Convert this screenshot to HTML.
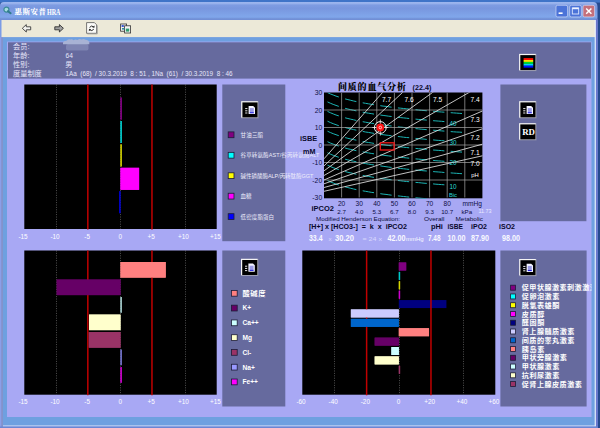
<!DOCTYPE html>
<html lang="zh"><head><meta charset="utf-8"><title>惠斯安普HRA</title>
<style>html,body{margin:0;padding:0;background:#25498e;overflow:hidden}svg{display:block}</style></head>
<body>
<svg width="600" height="428" viewBox="0 0 600 428">
<defs>
<linearGradient id="tb" gradientUnits="userSpaceOnUse" x1="0" y1="2" x2="0" y2="20"><stop offset="0" stop-color="#9cb6ee"/><stop offset="0.08" stop-color="#98b2ec"/><stop offset="0.17" stop-color="#7e9ce2"/><stop offset="0.35" stop-color="#7896de"/><stop offset="0.8" stop-color="#80a6ea"/><stop offset="0.9" stop-color="#7a9ee4"/><stop offset="0.94" stop-color="#6c88cc"/><stop offset="1" stop-color="#6c88cc"/></linearGradient>
<linearGradient id="rb" x1="0" y1="0" x2="0" y2="1"><stop offset="0" stop-color="#ff0000"/><stop offset="0.2" stop-color="#ff8000"/><stop offset="0.4" stop-color="#ffff00"/><stop offset="0.6" stop-color="#00e000"/><stop offset="0.8" stop-color="#00c0ff"/><stop offset="1" stop-color="#0000ff"/></linearGradient>
<filter id="blur2" x="-20%" y="-50%" width="140%" height="200%"><feGaussianBlur stdDeviation="0.7"/></filter><filter id="blur3" x="-20%" y="-50%" width="140%" height="200%"><feGaussianBlur stdDeviation="0.45"/></filter>
<clipPath id="bgclip"><rect x="324" y="92.5" width="158.4" height="106"/></clipPath>
<clipPath id="l4clip"><rect x="500.5" y="250.5" width="91" height="156"/></clipPath>
</defs>
<rect x="0.00" y="0.00" width="600.00" height="428.00" fill="#25498e" />
<rect x="0.00" y="0.00" width="600.00" height="2.60" fill="#3f74c8" />
<path d="M0,428 L0,6 Q0,2 4,2 L593,2 Q597.5,2 597.5,7 L597.5,428 Z" fill="url(#tb)"/>
<rect x="0.00" y="19.60" width="597.50" height="409.00" fill="#7b9be6" />
<rect x="1.50" y="20.00" width="594.00" height="17.30" fill="#ece9d8" />
<rect x="3.00" y="37.30" width="593.00" height="388.50" fill="#6ea0e0" />
<rect x="0.00" y="37.30" width="3.00" height="391.00" fill="#8c9ee8" />
<rect x="1.60" y="37.30" width="0.90" height="391.00" fill="#7a86b0" />
<rect x="594.70" y="20.00" width="1.20" height="406.00" fill="#eef6fe" />
<rect x="595.90" y="19.00" width="1.70" height="409.00" fill="#6a76cc" />
<rect x="3.00" y="425.50" width="593.00" height="1.00" fill="#dfe8fa" />
<rect x="0.00" y="426.50" width="597.50" height="1.50" fill="#6a86d4" />
<rect x="7.00" y="41.60" width="584.50" height="375.40" fill="#a8a8f4" />
<rect x="8.00" y="42.30" width="583.00" height="36.30" fill="#666a9e" />
<g>
<g filter="url(#blur3)"><circle cx="6.4" cy="9.6" r="2.5" fill="#a4dcdc" stroke="#3a8a98" stroke-width="1.2"/><path d="M8 11.2 L10.6 13.2" stroke="#2f7c8c" stroke-width="2" stroke-linecap="round"/></g>
<text x="14.50" y="13.80" font-size="7.4" fill="#fff" font-weight="900" font-family='"Liberation Serif","Noto Serif CJK SC",serif' text-anchor="start" textLength="31.5" lengthAdjust="spacing">惠斯安普</text>
<text x="47.00" y="14.80" font-size="7.2" fill="#fff" font-weight="bold" font-family='"Liberation Serif","Noto Serif CJK SC",serif' text-anchor="start" textLength="13.5" lengthAdjust="spacingAndGlyphs">HRA</text>
</g>
<rect x="556" y="5.3" width="11.6" height="11.6" rx="1.6" fill="#4b73d8" stroke="#dfe6fa" stroke-width="0.8" stroke-opacity="0.75"/>
<rect x="558.60" y="12.40" width="4.00" height="1.60" fill="#fff" />
<rect x="569.7" y="5.3" width="11.6" height="11.6" rx="1.6" fill="#4b73d8" stroke="#dfe6fa" stroke-width="0.8" stroke-opacity="0.75"/>
<rect x="572.3000000000001" y="8" width="6.4" height="6" fill="none" stroke="#dfe8ff" stroke-width="0.9"/><rect x="572.3000000000001" y="7.6" width="6.4" height="1.6" fill="#eef2ff"/>
<rect x="583" y="5.3" width="11.6" height="11.6" rx="1.6" fill="#c4707c" stroke="#dfe6fa" stroke-width="0.8" stroke-opacity="0.75"/>
<path d="M586.2 8.5 L591.4 13.7 M591.4 8.5 L586.2 13.7" stroke="#fff" stroke-width="1.5"/>
<path d="M22.3 28.3 L26.3 24.6 L26.3 26.8 L30.7 26.8 L30.7 29.8 L26.3 29.8 L26.3 32 Z" fill="#f4f4f0" stroke="#3a3a3a" stroke-width="0.9"/>
<path d="M63.4 28.3 L59.4 24.6 L59.4 26.8 L54.8 26.8 L54.8 29.8 L59.4 29.8 L59.4 32 Z" fill="#a0a0a0" stroke="#303030" stroke-width="0.9"/>
<path d="M86.6 22.6 L94.4 22.6 L96.6 24.8 L96.6 33.3 L86.6 33.3 Z" fill="#fbfbf8" stroke="#555" stroke-width="0.8"/><path d="M87.4 33.9 L97.3 33.9 L97.3 25.4" fill="none" stroke="#9a9a9a" stroke-width="0.8"/>
<path d="M89.6 27.4 q2 -2.6 4.2 -0.4 M93.8 29.2 q-2 2.6 -4.2 0.4" fill="none" stroke="#2a2a2a" stroke-width="1"/><path d="M94.6 25.4 L94.4 27.8 L92.2 27.2 Z M88.8 31.2 L89 28.8 L91.2 29.4 Z" fill="#2a2a2a"/>
<rect x="120.6" y="24" width="6" height="7.2" fill="#f0f0f0" stroke="#333" stroke-width="0.8"/><rect x="124.6" y="25.8" width="6" height="7.2" fill="#f4f4f4" stroke="#333" stroke-width="0.8"/><rect x="121.6" y="25" width="2.2" height="2" fill="#3c5ad0"/><rect x="125.8" y="28.6" width="3.4" height="3" fill="#2f9f6f"/><rect x="122" y="28" width="2.4" height="1.6" fill="#2f8f9f"/>
<text x="13.00" y="49.10" font-size="7.2" fill="#e6e6fa" font-weight="normal" font-family='"Liberation Sans","Noto Sans CJK SC",sans-serif' text-anchor="start" >会员:</text>
<text x="13.00" y="57.95" font-size="7.2" fill="#e6e6fa" font-weight="normal" font-family='"Liberation Sans","Noto Sans CJK SC",sans-serif' text-anchor="start" >年龄:</text>
<text x="13.00" y="66.80" font-size="7.2" fill="#e6e6fa" font-weight="normal" font-family='"Liberation Sans","Noto Sans CJK SC",sans-serif' text-anchor="start" >性别:</text>
<text x="13.00" y="75.65" font-size="7.2" fill="#e6e6fa" font-weight="normal" font-family='"Liberation Sans","Noto Sans CJK SC",sans-serif' text-anchor="start" >度量制度</text>
<text x="65.50" y="58.20" font-size="6.6" fill="#e6e6fa" font-weight="normal" font-family='"Liberation Sans","Noto Sans CJK SC",sans-serif' text-anchor="start" >64</text>
<text x="65.30" y="67.30" font-size="7.2" fill="#e6e6fa" font-weight="normal" font-family='"Liberation Sans","Noto Sans CJK SC",sans-serif' text-anchor="start" >男</text>
<text x="65.50" y="75.90" font-size="6.5" fill="#e6e6fa" font-weight="normal" font-family='"Liberation Sans","Noto Sans CJK SC",sans-serif' text-anchor="start" textLength="167" lengthAdjust="spacingAndGlyphs" xml:space="preserve">1Aa  (68)  / 30.3.2019  8 : 51 , 1Na  (61)  / 30.3.2019  8 : 46</text>
<g filter="url(#blur2)"><rect x="66" y="44" width="22.5" height="6.6" rx="2" fill="#7e84b2"/></g>
<g filter="url(#blur3)"><path d="M63 44.3 L63 42.6 Q64 40.6 66.5 40.8 Q68 38.6 70.5 39.6 Q72 38.8 73.5 40.2 Q75.5 38.8 77.5 40 Q79.5 38.4 81.5 39.6 Q83.5 38.4 85.5 39.8 Q88.5 39.8 89.3 42.6 L89.3 44.3 Z" fill="#a8b2d4"/></g>
<rect x="519.10" y="53.90" width="17.40" height="17.20" fill="#8a8ca8" />
<rect x="519.10" y="53.90" width="16.60" height="16.40" fill="#f4f4f4" />
<rect x="520.30" y="55.10" width="15.20" height="15.00" fill="#000" />
<rect x="523.60" y="58.10" width="9.60" height="1.95" fill="#ff1000" />
<rect x="523.60" y="60.00" width="9.60" height="1.95" fill="#ffe000" />
<rect x="523.60" y="61.90" width="9.60" height="1.95" fill="#00e020" />
<rect x="523.60" y="63.80" width="9.60" height="1.95" fill="#00d0ff" />
<rect x="523.60" y="65.70" width="9.60" height="1.95" fill="#0010ff" />
<rect x="24.30" y="84.50" width="192.40" height="144.50" fill="#000" />
<line x1="56.50" y1="84.50" x2="56.50" y2="229.00" stroke="#909090" stroke-width="1" stroke-dasharray="1 1.4" stroke-opacity="0.55"/>
<line x1="120.50" y1="84.50" x2="120.50" y2="229.00" stroke="#909090" stroke-width="1" stroke-dasharray="1 1.4" stroke-opacity="0.55"/>
<line x1="185.50" y1="84.50" x2="185.50" y2="229.00" stroke="#909090" stroke-width="1" stroke-dasharray="1 1.4" stroke-opacity="0.55"/>
<rect x="120.50" y="97.60" width="1.30" height="22.00" fill="#800080" />
<rect x="120.50" y="121.00" width="1.30" height="22.00" fill="#00c8c8" />
<rect x="120.50" y="144.40" width="1.30" height="22.00" fill="#c8c800" />
<rect x="120.50" y="167.80" width="18.60" height="22.00" fill="#ff00ff" />
<rect x="119.20" y="191.20" width="1.30" height="22.00" fill="#0000c8" />
<line x1="87.83" y1="84.50" x2="87.83" y2="229.60" stroke="#c00000" stroke-width="1.5" />
<line x1="151.97" y1="84.50" x2="151.97" y2="229.60" stroke="#c00000" stroke-width="1.5" />
<rect x="120.50" y="97.60" width="1.30" height="22.00" fill="#800080" />
<rect x="120.50" y="121.00" width="1.30" height="22.00" fill="#00c8c8" />
<rect x="120.50" y="144.40" width="1.30" height="22.00" fill="#c8c800" />
<rect x="120.50" y="167.80" width="18.60" height="22.00" fill="#ff00ff" />
<rect x="119.20" y="191.20" width="1.30" height="22.00" fill="#0000c8" />
<text x="23.00" y="239.40" font-size="6.4" fill="#fff" font-weight="normal" font-family='"Liberation Sans","Noto Sans CJK SC",sans-serif' text-anchor="middle" >-15</text>
<text x="55.07" y="239.40" font-size="6.4" fill="#fff" font-weight="normal" font-family='"Liberation Sans","Noto Sans CJK SC",sans-serif' text-anchor="middle" >-10</text>
<text x="87.13" y="239.40" font-size="6.4" fill="#fff" font-weight="normal" font-family='"Liberation Sans","Noto Sans CJK SC",sans-serif' text-anchor="middle" >-5</text>
<text x="120.20" y="239.40" font-size="6.4" fill="#fff" font-weight="normal" font-family='"Liberation Sans","Noto Sans CJK SC",sans-serif' text-anchor="middle" >0</text>
<text x="151.27" y="239.40" font-size="6.4" fill="#fff" font-weight="normal" font-family='"Liberation Sans","Noto Sans CJK SC",sans-serif' text-anchor="middle" >+5</text>
<text x="183.33" y="239.40" font-size="6.4" fill="#fff" font-weight="normal" font-family='"Liberation Sans","Noto Sans CJK SC",sans-serif' text-anchor="middle" >+10</text>
<text x="215.40" y="239.40" font-size="6.4" fill="#fff" font-weight="normal" font-family='"Liberation Sans","Noto Sans CJK SC",sans-serif' text-anchor="middle" >+15</text>
<rect x="24.30" y="250.50" width="192.40" height="144.20" fill="#000" />
<line x1="56.50" y1="250.50" x2="56.50" y2="394.70" stroke="#909090" stroke-width="1" stroke-dasharray="1 1.4" stroke-opacity="0.55"/>
<line x1="120.50" y1="250.50" x2="120.50" y2="394.70" stroke="#909090" stroke-width="1" stroke-dasharray="1 1.4" stroke-opacity="0.55"/>
<line x1="185.50" y1="250.50" x2="185.50" y2="394.70" stroke="#909090" stroke-width="1" stroke-dasharray="1 1.4" stroke-opacity="0.55"/>
<rect x="120.50" y="262.00" width="45.21" height="15.60" fill="#ff8080" />
<rect x="56.69" y="279.52" width="63.81" height="15.60" fill="#660066" />
<rect x="120.50" y="297.04" width="1.30" height="15.60" fill="#a0c8c8" />
<rect x="89.07" y="314.56" width="31.43" height="15.60" fill="#ffffcc" />
<rect x="88.75" y="332.08" width="31.75" height="15.60" fill="#993366" />
<rect x="120.50" y="349.60" width="1.30" height="15.60" fill="#7070c8" />
<rect x="120.50" y="367.12" width="1.30" height="15.60" fill="#c800c8" />
<line x1="87.83" y1="250.50" x2="87.83" y2="395.30" stroke="#c00000" stroke-width="1.5" />
<line x1="151.97" y1="250.50" x2="151.97" y2="395.30" stroke="#c00000" stroke-width="1.5" />
<rect x="120.50" y="262.00" width="45.21" height="15.60" fill="#ff8080" />
<rect x="56.69" y="279.52" width="63.81" height="15.60" fill="#660066" />
<rect x="120.50" y="297.04" width="1.30" height="15.60" fill="#a0c8c8" />
<rect x="89.07" y="314.56" width="31.43" height="15.60" fill="#ffffcc" />
<rect x="88.75" y="332.08" width="31.75" height="15.60" fill="#993366" />
<rect x="120.50" y="349.60" width="1.30" height="15.60" fill="#7070c8" />
<rect x="120.50" y="367.12" width="1.30" height="15.60" fill="#c800c8" />
<text x="23.00" y="404.10" font-size="6.4" fill="#fff" font-weight="normal" font-family='"Liberation Sans","Noto Sans CJK SC",sans-serif' text-anchor="middle" >-15</text>
<text x="55.07" y="404.10" font-size="6.4" fill="#fff" font-weight="normal" font-family='"Liberation Sans","Noto Sans CJK SC",sans-serif' text-anchor="middle" >-10</text>
<text x="87.13" y="404.10" font-size="6.4" fill="#fff" font-weight="normal" font-family='"Liberation Sans","Noto Sans CJK SC",sans-serif' text-anchor="middle" >-5</text>
<text x="120.20" y="404.10" font-size="6.4" fill="#fff" font-weight="normal" font-family='"Liberation Sans","Noto Sans CJK SC",sans-serif' text-anchor="middle" >0</text>
<text x="151.27" y="404.10" font-size="6.4" fill="#fff" font-weight="normal" font-family='"Liberation Sans","Noto Sans CJK SC",sans-serif' text-anchor="middle" >+5</text>
<text x="183.33" y="404.10" font-size="6.4" fill="#fff" font-weight="normal" font-family='"Liberation Sans","Noto Sans CJK SC",sans-serif' text-anchor="middle" >+10</text>
<text x="215.40" y="404.10" font-size="6.4" fill="#fff" font-weight="normal" font-family='"Liberation Sans","Noto Sans CJK SC",sans-serif' text-anchor="middle" >+15</text>
<rect x="302.30" y="250.50" width="193.00" height="144.20" fill="#000" />
<line x1="334.50" y1="250.50" x2="334.50" y2="394.70" stroke="#909090" stroke-width="1" stroke-dasharray="1 1.4" stroke-opacity="0.55"/>
<line x1="399.50" y1="250.50" x2="399.50" y2="394.70" stroke="#909090" stroke-width="1" stroke-dasharray="1 1.4" stroke-opacity="0.55"/>
<line x1="463.50" y1="250.50" x2="463.50" y2="394.70" stroke="#909090" stroke-width="1" stroke-dasharray="1 1.4" stroke-opacity="0.55"/>
<rect x="398.80" y="262.50" width="7.40" height="8.00" fill="#800080" />
<rect x="398.80" y="271.89" width="1.30" height="8.00" fill="#00c8c8" />
<rect x="398.80" y="281.28" width="1.30" height="8.00" fill="#d8d800" />
<rect x="398.80" y="290.67" width="1.30" height="8.00" fill="#d000d0" />
<rect x="398.80" y="300.06" width="47.61" height="8.00" fill="#000080" />
<rect x="350.87" y="309.45" width="47.93" height="8.00" fill="#ccccff" />
<rect x="350.87" y="318.84" width="47.93" height="8.00" fill="#0066cc" />
<rect x="398.80" y="328.23" width="30.24" height="8.00" fill="#ff8080" />
<rect x="374.68" y="337.62" width="24.12" height="8.00" fill="#660066" />
<rect x="391.40" y="347.01" width="7.40" height="8.00" fill="#ccffff" />
<rect x="374.68" y="356.40" width="24.12" height="8.00" fill="#ffffcc" />
<rect x="398.80" y="365.79" width="1.30" height="8.00" fill="#993366" />
<line x1="366.63" y1="250.50" x2="366.63" y2="395.30" stroke="#c00000" stroke-width="1.5" />
<line x1="430.97" y1="250.50" x2="430.97" y2="395.30" stroke="#c00000" stroke-width="1.5" />
<rect x="398.80" y="262.50" width="7.40" height="8.00" fill="#800080" />
<rect x="398.80" y="271.89" width="1.30" height="8.00" fill="#00c8c8" />
<rect x="398.80" y="281.28" width="1.30" height="8.00" fill="#d8d800" />
<rect x="398.80" y="290.67" width="1.30" height="8.00" fill="#d000d0" />
<rect x="350.87" y="309.45" width="47.93" height="8.00" fill="#ccccff" />
<rect x="350.87" y="318.84" width="47.93" height="8.00" fill="#0066cc" />
<rect x="398.80" y="328.23" width="30.24" height="8.00" fill="#ff8080" />
<rect x="374.68" y="337.62" width="24.12" height="8.00" fill="#660066" />
<rect x="391.40" y="347.01" width="7.40" height="8.00" fill="#ccffff" />
<rect x="374.68" y="356.40" width="24.12" height="8.00" fill="#ffffcc" />
<rect x="398.80" y="365.79" width="1.30" height="8.00" fill="#993366" />
<text x="301.00" y="404.10" font-size="6.4" fill="#fff" font-weight="normal" font-family='"Liberation Sans","Noto Sans CJK SC",sans-serif' text-anchor="middle" >-60</text>
<text x="333.17" y="404.10" font-size="6.4" fill="#fff" font-weight="normal" font-family='"Liberation Sans","Noto Sans CJK SC",sans-serif' text-anchor="middle" >-40</text>
<text x="365.33" y="404.10" font-size="6.4" fill="#fff" font-weight="normal" font-family='"Liberation Sans","Noto Sans CJK SC",sans-serif' text-anchor="middle" >-20</text>
<text x="398.50" y="404.10" font-size="6.4" fill="#fff" font-weight="normal" font-family='"Liberation Sans","Noto Sans CJK SC",sans-serif' text-anchor="middle" >0</text>
<text x="429.67" y="404.10" font-size="6.4" fill="#fff" font-weight="normal" font-family='"Liberation Sans","Noto Sans CJK SC",sans-serif' text-anchor="middle" >+20</text>
<text x="461.83" y="404.10" font-size="6.4" fill="#fff" font-weight="normal" font-family='"Liberation Sans","Noto Sans CJK SC",sans-serif' text-anchor="middle" >+40</text>
<text x="494.00" y="404.10" font-size="6.4" fill="#fff" font-weight="normal" font-family='"Liberation Sans","Noto Sans CJK SC",sans-serif' text-anchor="middle" >+60</text>
<rect x="222.30" y="84.50" width="63.00" height="156.70" fill="#666a9e" />
<rect x="241.20" y="101.20" width="17.40" height="17.20" fill="#8a8ca8" />
<rect x="241.20" y="101.20" width="16.60" height="16.40" fill="#f4f4f4" />
<rect x="242.40" y="102.40" width="15.20" height="15.00" fill="#000" />
<path d="M248.6 105.89999999999999 L253.2 105.89999999999999 L255.0 107.69999999999999 L255.0 114.1 L248.6 114.1 Z" fill="#f4f4ff"/>
<rect x="249.80" y="108.10" width="4.00" height="4.20" fill="#9c9ce4" />
<rect x="249.80" y="112.20" width="4.00" height="1.10" fill="#2020e0" />
<rect x="245.20" y="108.10" width="2.20" height="1.00" fill="#e8e8e8" />
<rect x="245.20" y="110.30" width="2.20" height="1.00" fill="#e8e8e8" />
<rect x="245.20" y="112.50" width="2.20" height="1.00" fill="#e8e8e8" />
<rect x="228.20" y="131.90" width="5.80" height="5.80" fill="#800080" stroke="#1c1c38" stroke-width="0.8"/>
<text x="240.60" y="136.90" font-size="5.5" fill="#ececfa" font-weight="normal" font-family='"Liberation Sans","Noto Sans CJK SC",sans-serif' text-anchor="start" textLength="22.5" lengthAdjust="spacing">甘油三酯</text>
<rect x="228.20" y="152.35" width="5.80" height="5.80" fill="#00ffff" stroke="#1c1c38" stroke-width="0.8"/>
<text x="240.60" y="157.35" font-size="5.5" fill="#ececfa" font-weight="normal" font-family='"Liberation Sans","Noto Sans CJK SC",sans-serif' text-anchor="start" textLength="78.7" lengthAdjust="spacing">谷草转氨酶AST/谷丙转氨酶ALT</text>
<rect x="228.20" y="172.80" width="5.80" height="5.80" fill="#ffff00" stroke="#1c1c38" stroke-width="0.8"/>
<text x="240.60" y="177.80" font-size="5.5" fill="#ececfa" font-weight="normal" font-family='"Liberation Sans","Noto Sans CJK SC",sans-serif' text-anchor="start" textLength="72.7" lengthAdjust="spacing">碱性磷酸酶ALP/丙转肽酶GGT</text>
<rect x="228.20" y="193.25" width="5.80" height="5.80" fill="#ff00ff" stroke="#1c1c38" stroke-width="0.8"/>
<text x="240.60" y="198.25" font-size="5.5" fill="#ececfa" font-weight="normal" font-family='"Liberation Sans","Noto Sans CJK SC",sans-serif' text-anchor="start" textLength="11" lengthAdjust="spacing">血糖</text>
<rect x="228.20" y="213.70" width="5.80" height="5.80" fill="#0000ff" stroke="#1c1c38" stroke-width="0.8"/>
<text x="240.60" y="218.70" font-size="5.5" fill="#ececfa" font-weight="normal" font-family='"Liberation Sans","Noto Sans CJK SC",sans-serif' text-anchor="start" textLength="33.5" lengthAdjust="spacing">低密度脂蛋白</text>
<rect x="500.40" y="84.50" width="86.00" height="136.70" fill="#666a9e" />
<rect x="519.20" y="101.20" width="17.40" height="17.20" fill="#8a8ca8" />
<rect x="519.20" y="101.20" width="16.60" height="16.40" fill="#f4f4f4" />
<rect x="520.40" y="102.40" width="15.20" height="15.00" fill="#000" />
<path d="M526.6 105.89999999999999 L531.2 105.89999999999999 L533.0 107.69999999999999 L533.0 114.1 L526.6 114.1 Z" fill="#f4f4ff"/>
<rect x="527.80" y="108.10" width="4.00" height="4.20" fill="#9c9ce4" />
<rect x="527.80" y="112.20" width="4.00" height="1.10" fill="#2020e0" />
<rect x="523.20" y="108.10" width="2.20" height="1.00" fill="#e8e8e8" />
<rect x="523.20" y="110.30" width="2.20" height="1.00" fill="#e8e8e8" />
<rect x="523.20" y="112.50" width="2.20" height="1.00" fill="#e8e8e8" />
<rect x="519.10" y="123.20" width="17.40" height="17.20" fill="#8a8ca8" />
<rect x="519.10" y="123.20" width="16.60" height="16.40" fill="#f4f4f4" />
<rect x="520.30" y="124.40" width="15.20" height="15.00" fill="#000" />
<text x="522.20" y="134.80" font-size="7.8" fill="#fff" font-weight="bold" font-family='"Liberation Serif","Noto Serif CJK SC",serif' text-anchor="start" textLength="12.8" lengthAdjust="spacingAndGlyphs">RD</text>
<rect x="222.30" y="250.50" width="63.00" height="156.00" fill="#666a9e" />
<rect x="241.00" y="258.80" width="17.40" height="17.20" fill="#8a8ca8" />
<rect x="241.00" y="258.80" width="16.60" height="16.40" fill="#f4f4f4" />
<rect x="242.20" y="260.00" width="15.20" height="15.00" fill="#000" />
<path d="M248.4 263.5 L253.0 263.5 L254.8 265.3 L254.8 271.7 L248.4 271.7 Z" fill="#f4f4ff"/>
<rect x="249.60" y="265.70" width="4.00" height="4.20" fill="#9c9ce4" />
<rect x="249.60" y="269.80" width="4.00" height="1.10" fill="#2020e0" />
<rect x="245.00" y="265.70" width="2.20" height="1.00" fill="#e8e8e8" />
<rect x="245.00" y="267.90" width="2.20" height="1.00" fill="#e8e8e8" />
<rect x="245.00" y="270.10" width="2.20" height="1.00" fill="#e8e8e8" />
<rect x="231.40" y="290.40" width="5.80" height="5.80" fill="#ff8080" stroke="#1c1c38" stroke-width="0.8"/>
<text x="242.50" y="296.00" font-size="7.3" fill="#fff" font-weight="bold" font-family='"Liberation Sans","Noto Sans CJK SC",sans-serif' text-anchor="start" textLength="23" lengthAdjust="spacing">酸碱度</text>
<rect x="231.40" y="305.17" width="5.80" height="5.80" fill="#660066" stroke="#1c1c38" stroke-width="0.8"/>
<text x="242.50" y="310.47" font-size="6.6" fill="#fff" font-weight="bold" font-family='"Liberation Sans","Noto Sans CJK SC",sans-serif' text-anchor="start" >K+</text>
<rect x="231.40" y="319.94" width="5.80" height="5.80" fill="#ccffff" stroke="#1c1c38" stroke-width="0.8"/>
<text x="242.50" y="325.24" font-size="6.6" fill="#fff" font-weight="bold" font-family='"Liberation Sans","Noto Sans CJK SC",sans-serif' text-anchor="start" >Ca++</text>
<rect x="231.40" y="334.71" width="5.80" height="5.80" fill="#ffffcc" stroke="#1c1c38" stroke-width="0.8"/>
<text x="242.50" y="340.01" font-size="6.6" fill="#fff" font-weight="bold" font-family='"Liberation Sans","Noto Sans CJK SC",sans-serif' text-anchor="start" >Mg</text>
<rect x="231.40" y="349.48" width="5.80" height="5.80" fill="#993366" stroke="#1c1c38" stroke-width="0.8"/>
<text x="242.50" y="354.78" font-size="6.6" fill="#fff" font-weight="bold" font-family='"Liberation Sans","Noto Sans CJK SC",sans-serif' text-anchor="start" >Cl-</text>
<rect x="231.40" y="364.25" width="5.80" height="5.80" fill="#9999ff" stroke="#1c1c38" stroke-width="0.8"/>
<text x="242.50" y="369.55" font-size="6.6" fill="#fff" font-weight="bold" font-family='"Liberation Sans","Noto Sans CJK SC",sans-serif' text-anchor="start" >Na+</text>
<rect x="231.40" y="379.02" width="5.80" height="5.80" fill="#ff00ff" stroke="#1c1c38" stroke-width="0.8"/>
<text x="242.50" y="384.32" font-size="6.6" fill="#fff" font-weight="bold" font-family='"Liberation Sans","Noto Sans CJK SC",sans-serif' text-anchor="start" >Fe++</text>
<rect x="500.40" y="250.50" width="86.20" height="156.00" fill="#666a9e" />
<rect x="519.20" y="259.00" width="17.40" height="17.20" fill="#8a8ca8" />
<rect x="519.20" y="259.00" width="16.60" height="16.40" fill="#f4f4f4" />
<rect x="520.40" y="260.20" width="15.20" height="15.00" fill="#000" />
<path d="M526.6 263.70000000000005 L531.2 263.70000000000005 L533.0 265.50000000000006 L533.0 271.90000000000003 L526.6 271.90000000000003 Z" fill="#f4f4ff"/>
<rect x="527.80" y="265.90" width="4.00" height="4.20" fill="#9c9ce4" />
<rect x="527.80" y="270.00" width="4.00" height="1.10" fill="#2020e0" />
<rect x="523.20" y="265.90" width="2.20" height="1.00" fill="#e8e8e8" />
<rect x="523.20" y="268.10" width="2.20" height="1.00" fill="#e8e8e8" />
<rect x="523.20" y="270.30" width="2.20" height="1.00" fill="#e8e8e8" />
<g clip-path="url(#l4clip)">
<rect x="510.60" y="285.20" width="5.00" height="5.00" fill="#800080" stroke="#1c1c38" stroke-width="0.8"/>
<text x="521.80" y="290.30" font-size="7.1" fill="#fff" font-weight="bold" font-family='"Liberation Sans","Noto Sans CJK SC",sans-serif' text-anchor="start" textLength="75.0" lengthAdjust="spacing">促甲状腺激素刺激激素</text>
<rect x="510.60" y="293.96" width="5.00" height="5.00" fill="#00ffff" stroke="#1c1c38" stroke-width="0.8"/>
<text x="521.80" y="299.06" font-size="7.1" fill="#fff" font-weight="bold" font-family='"Liberation Sans","Noto Sans CJK SC",sans-serif' text-anchor="start" textLength="37.5" lengthAdjust="spacing">促卵泡激素</text>
<rect x="510.60" y="302.72" width="5.00" height="5.00" fill="#ffff00" stroke="#1c1c38" stroke-width="0.8"/>
<text x="521.80" y="307.82" font-size="7.1" fill="#fff" font-weight="bold" font-family='"Liberation Sans","Noto Sans CJK SC",sans-serif' text-anchor="start" textLength="37.5" lengthAdjust="spacing">脱氢表雄酮</text>
<rect x="510.60" y="311.48" width="5.00" height="5.00" fill="#ff00ff" stroke="#1c1c38" stroke-width="0.8"/>
<text x="521.80" y="316.58" font-size="7.1" fill="#fff" font-weight="bold" font-family='"Liberation Sans","Noto Sans CJK SC",sans-serif' text-anchor="start" textLength="22.5" lengthAdjust="spacing">皮质醇</text>
<rect x="510.60" y="320.24" width="5.00" height="5.00" fill="#000080" stroke="#1c1c38" stroke-width="0.8"/>
<text x="521.80" y="325.34" font-size="7.1" fill="#fff" font-weight="bold" font-family='"Liberation Sans","Noto Sans CJK SC",sans-serif' text-anchor="start" textLength="22.5" lengthAdjust="spacing">醛固酮</text>
<rect x="510.60" y="329.00" width="5.00" height="5.00" fill="#ccccff" stroke="#1c1c38" stroke-width="0.8"/>
<text x="521.80" y="334.10" font-size="7.1" fill="#fff" font-weight="bold" font-family='"Liberation Sans","Noto Sans CJK SC",sans-serif' text-anchor="start" textLength="52.5" lengthAdjust="spacing">肾上腺髓质激素</text>
<rect x="510.60" y="337.76" width="5.00" height="5.00" fill="#0066cc" stroke="#1c1c38" stroke-width="0.8"/>
<text x="521.80" y="342.86" font-size="7.1" fill="#fff" font-weight="bold" font-family='"Liberation Sans","Noto Sans CJK SC",sans-serif' text-anchor="start" textLength="52.5" lengthAdjust="spacing">间质的睾丸激素</text>
<rect x="510.60" y="346.52" width="5.00" height="5.00" fill="#ff8080" stroke="#1c1c38" stroke-width="0.8"/>
<text x="521.80" y="351.62" font-size="7.1" fill="#fff" font-weight="bold" font-family='"Liberation Sans","Noto Sans CJK SC",sans-serif' text-anchor="start" textLength="22.5" lengthAdjust="spacing">胰岛素</text>
<rect x="510.60" y="355.28" width="5.00" height="5.00" fill="#660066" stroke="#1c1c38" stroke-width="0.8"/>
<text x="521.80" y="360.38" font-size="7.1" fill="#fff" font-weight="bold" font-family='"Liberation Sans","Noto Sans CJK SC",sans-serif' text-anchor="start" textLength="45.0" lengthAdjust="spacing">甲状旁腺激素</text>
<rect x="510.60" y="364.04" width="5.00" height="5.00" fill="#ccffff" stroke="#1c1c38" stroke-width="0.8"/>
<text x="521.80" y="369.14" font-size="7.1" fill="#fff" font-weight="bold" font-family='"Liberation Sans","Noto Sans CJK SC",sans-serif' text-anchor="start" textLength="37.5" lengthAdjust="spacing">甲状腺激素</text>
<rect x="510.60" y="372.80" width="5.00" height="5.00" fill="#ffffcc" stroke="#1c1c38" stroke-width="0.8"/>
<text x="521.80" y="377.90" font-size="7.1" fill="#fff" font-weight="bold" font-family='"Liberation Sans","Noto Sans CJK SC",sans-serif' text-anchor="start" textLength="37.5" lengthAdjust="spacing">抗利尿激素</text>
<rect x="510.60" y="381.56" width="5.00" height="5.00" fill="#993366" stroke="#1c1c38" stroke-width="0.8"/>
<text x="521.80" y="386.66" font-size="7.1" fill="#fff" font-weight="bold" font-family='"Liberation Sans","Noto Sans CJK SC",sans-serif' text-anchor="start" textLength="60.0" lengthAdjust="spacing">促肾上腺皮质激素</text>
</g>
<rect x="324.00" y="92.50" width="158.40" height="105.80" fill="#000" />
<g clip-path="url(#bgclip)">
<path d="M327.5 180.6 L330.3 181.9 L333.2 183.0 L336.0 184.1 L338.8 185.0" fill="none" stroke="#1cb4b4" stroke-width="1"/>
<path d="M327.5 165.2 L330.3 166.5 L333.2 167.7 L336.0 168.7 L338.8 169.7" fill="none" stroke="#1cb4b4" stroke-width="1"/>
<path d="M327.5 152.8 L330.3 154.1 L333.2 155.3 L336.0 156.3 L338.8 157.3" fill="none" stroke="#1cb4b4" stroke-width="1"/>
<path d="M327.5 141.7 L330.3 143.0 L333.2 144.1 L336.0 145.2 L338.8 146.1" fill="none" stroke="#1cb4b4" stroke-width="1"/>
<path d="M327.5 131.2 L330.3 132.5 L333.2 133.7 L336.0 134.7 L338.8 135.7" fill="none" stroke="#1cb4b4" stroke-width="1"/>
<path d="M327.5 121.2 L330.3 122.5 L333.2 123.7 L336.0 124.7 L338.8 125.7" fill="none" stroke="#1cb4b4" stroke-width="1"/>
<path d="M327.5 111.4 L330.3 112.7 L333.2 113.9 L336.0 115.0 L338.8 115.9" fill="none" stroke="#1cb4b4" stroke-width="1"/>
<path d="M327.5 101.9 L330.3 103.2 L333.2 104.4 L336.0 105.4 L338.8 106.4" fill="none" stroke="#1cb4b4" stroke-width="1"/>
<path d="M327.5 92.6 L330.3 93.9 L333.2 95.0 L336.0 96.1 L338.8 97.0" fill="none" stroke="#1cb4b4" stroke-width="1"/>
<path d="M345.1 186.9 L347.9 187.6 L350.8 188.3 L353.6 189.0 L356.4 189.6" fill="none" stroke="#1cb4b4" stroke-width="1"/>
<path d="M345.1 171.5 L347.9 172.3 L350.8 172.9 L353.6 173.6 L356.4 174.2" fill="none" stroke="#1cb4b4" stroke-width="1"/>
<path d="M345.1 159.2 L347.9 159.9 L350.8 160.6 L353.6 161.2 L356.4 161.8" fill="none" stroke="#1cb4b4" stroke-width="1"/>
<path d="M345.1 148.0 L347.9 148.8 L350.8 149.4 L353.6 150.1 L356.4 150.7" fill="none" stroke="#1cb4b4" stroke-width="1"/>
<path d="M345.1 137.6 L347.9 138.3 L350.8 139.0 L353.6 139.6 L356.4 140.2" fill="none" stroke="#1cb4b4" stroke-width="1"/>
<path d="M345.1 127.5 L347.9 128.3 L350.8 128.9 L353.6 129.6 L356.4 130.2" fill="none" stroke="#1cb4b4" stroke-width="1"/>
<path d="M345.1 117.8 L347.9 118.5 L350.8 119.2 L353.6 119.8 L356.4 120.5" fill="none" stroke="#1cb4b4" stroke-width="1"/>
<path d="M345.1 108.3 L347.9 109.0 L350.8 109.7 L353.6 110.3 L356.4 110.9" fill="none" stroke="#1cb4b4" stroke-width="1"/>
<path d="M345.1 98.9 L347.9 99.6 L350.8 100.3 L353.6 101.0 L356.4 101.6" fill="none" stroke="#1cb4b4" stroke-width="1"/>
<path d="M362.7 190.8 L365.5 191.3 L368.4 191.8 L371.2 192.3 L374.0 192.7" fill="none" stroke="#1cb4b4" stroke-width="1"/>
<path d="M362.7 175.4 L365.5 176.0 L368.4 176.4 L371.2 176.9 L374.0 177.4" fill="none" stroke="#1cb4b4" stroke-width="1"/>
<path d="M362.7 163.1 L365.5 163.6 L368.4 164.1 L371.2 164.5 L374.0 165.0" fill="none" stroke="#1cb4b4" stroke-width="1"/>
<path d="M362.7 151.9 L365.5 152.5 L368.4 152.9 L371.2 153.4 L374.0 153.8" fill="none" stroke="#1cb4b4" stroke-width="1"/>
<path d="M362.7 141.5 L365.5 142.0 L368.4 142.5 L371.2 142.9 L374.0 143.4" fill="none" stroke="#1cb4b4" stroke-width="1"/>
<path d="M362.7 131.4 L365.5 132.0 L368.4 132.4 L371.2 132.9 L374.0 133.4" fill="none" stroke="#1cb4b4" stroke-width="1"/>
<path d="M362.7 121.7 L365.5 122.2 L368.4 122.7 L371.2 123.2 L374.0 123.6" fill="none" stroke="#1cb4b4" stroke-width="1"/>
<path d="M362.7 112.2 L365.5 112.7 L368.4 113.2 L371.2 113.6 L374.0 114.1" fill="none" stroke="#1cb4b4" stroke-width="1"/>
<path d="M362.7 102.8 L365.5 103.3 L368.4 103.8 L371.2 104.3 L374.0 104.7" fill="none" stroke="#1cb4b4" stroke-width="1"/>
<path d="M380.3 193.7 L383.1 194.1 L386.0 194.4 L388.8 194.8 L391.6 195.2" fill="none" stroke="#1cb4b4" stroke-width="1"/>
<path d="M380.3 178.3 L383.1 178.7 L386.0 179.1 L388.8 179.4 L391.6 179.8" fill="none" stroke="#1cb4b4" stroke-width="1"/>
<path d="M380.3 165.9 L383.1 166.3 L386.0 166.7 L388.8 167.1 L391.6 167.4" fill="none" stroke="#1cb4b4" stroke-width="1"/>
<path d="M380.3 154.8 L383.1 155.2 L386.0 155.6 L388.8 155.9 L391.6 156.3" fill="none" stroke="#1cb4b4" stroke-width="1"/>
<path d="M380.3 144.3 L383.1 144.7 L386.0 145.1 L388.8 145.5 L391.6 145.8" fill="none" stroke="#1cb4b4" stroke-width="1"/>
<path d="M380.3 134.3 L383.1 134.7 L386.0 135.1 L388.8 135.4 L391.6 135.8" fill="none" stroke="#1cb4b4" stroke-width="1"/>
<path d="M380.3 124.6 L383.1 124.9 L386.0 125.3 L388.8 125.7 L391.6 126.0" fill="none" stroke="#1cb4b4" stroke-width="1"/>
<path d="M380.3 115.0 L383.1 115.4 L386.0 115.8 L388.8 116.2 L391.6 116.5" fill="none" stroke="#1cb4b4" stroke-width="1"/>
<path d="M380.3 105.7 L383.1 106.1 L386.0 106.4 L388.8 106.8 L391.6 107.2" fill="none" stroke="#1cb4b4" stroke-width="1"/>
<path d="M397.9 195.9 L400.7 196.2 L403.6 196.5 L406.4 196.8 L409.2 197.1" fill="none" stroke="#1cb4b4" stroke-width="1"/>
<path d="M397.9 180.5 L400.7 180.8 L403.6 181.2 L406.4 181.5 L409.2 181.7" fill="none" stroke="#1cb4b4" stroke-width="1"/>
<path d="M397.9 168.2 L400.7 168.5 L403.6 168.8 L406.4 169.1 L409.2 169.4" fill="none" stroke="#1cb4b4" stroke-width="1"/>
<path d="M397.9 157.0 L400.7 157.3 L403.6 157.6 L406.4 157.9 L409.2 158.2" fill="none" stroke="#1cb4b4" stroke-width="1"/>
<path d="M397.9 146.6 L400.7 146.9 L403.6 147.2 L406.4 147.5 L409.2 147.8" fill="none" stroke="#1cb4b4" stroke-width="1"/>
<path d="M397.9 136.5 L400.7 136.8 L403.6 137.2 L406.4 137.5 L409.2 137.7" fill="none" stroke="#1cb4b4" stroke-width="1"/>
<path d="M397.9 126.8 L400.7 127.1 L403.6 127.4 L406.4 127.7 L409.2 128.0" fill="none" stroke="#1cb4b4" stroke-width="1"/>
<path d="M397.9 117.3 L400.7 117.6 L403.6 117.9 L406.4 118.2 L409.2 118.5" fill="none" stroke="#1cb4b4" stroke-width="1"/>
<path d="M397.9 107.9 L400.7 108.2 L403.6 108.5 L406.4 108.8 L409.2 109.1" fill="none" stroke="#1cb4b4" stroke-width="1"/>
<path d="M415.5 197.8 L418.3 198.0 L421.2 198.3 L424.0 198.5 L426.8 198.8" fill="none" stroke="#1cb4b4" stroke-width="1"/>
<path d="M415.5 182.4 L418.3 182.6 L421.2 182.9 L424.0 183.2 L426.8 183.4" fill="none" stroke="#1cb4b4" stroke-width="1"/>
<path d="M415.5 170.0 L418.3 170.3 L421.2 170.5 L424.0 170.8 L426.8 171.0" fill="none" stroke="#1cb4b4" stroke-width="1"/>
<path d="M415.5 158.9 L418.3 159.1 L421.2 159.4 L424.0 159.6 L426.8 159.9" fill="none" stroke="#1cb4b4" stroke-width="1"/>
<path d="M415.5 148.4 L418.3 148.7 L421.2 148.9 L424.0 149.2 L426.8 149.4" fill="none" stroke="#1cb4b4" stroke-width="1"/>
<path d="M415.5 138.4 L418.3 138.6 L421.2 138.9 L424.0 139.1 L426.8 139.4" fill="none" stroke="#1cb4b4" stroke-width="1"/>
<path d="M415.5 128.6 L418.3 128.9 L421.2 129.2 L424.0 129.4 L426.8 129.7" fill="none" stroke="#1cb4b4" stroke-width="1"/>
<path d="M415.5 119.1 L418.3 119.4 L421.2 119.6 L424.0 119.9 L426.8 120.1" fill="none" stroke="#1cb4b4" stroke-width="1"/>
<path d="M415.5 109.7 L418.3 110.0 L421.2 110.3 L424.0 110.5 L426.8 110.8" fill="none" stroke="#1cb4b4" stroke-width="1"/>
<path d="M433.1 199.3 L435.9 199.5 L438.8 199.8 L441.6 200.0 L444.4 200.2" fill="none" stroke="#1cb4b4" stroke-width="1"/>
<path d="M433.1 183.9 L435.9 184.2 L438.8 184.4 L441.6 184.6 L444.4 184.8" fill="none" stroke="#1cb4b4" stroke-width="1"/>
<path d="M433.1 171.6 L435.9 171.8 L438.8 172.0 L441.6 172.2 L444.4 172.5" fill="none" stroke="#1cb4b4" stroke-width="1"/>
<path d="M433.1 160.4 L435.9 160.7 L438.8 160.9 L441.6 161.1 L444.4 161.3" fill="none" stroke="#1cb4b4" stroke-width="1"/>
<path d="M433.1 150.0 L435.9 150.2 L438.8 150.4 L441.6 150.6 L444.4 150.9" fill="none" stroke="#1cb4b4" stroke-width="1"/>
<path d="M433.1 139.9 L435.9 140.2 L438.8 140.4 L441.6 140.6 L444.4 140.8" fill="none" stroke="#1cb4b4" stroke-width="1"/>
<path d="M433.1 130.2 L435.9 130.4 L438.8 130.6 L441.6 130.9 L444.4 131.1" fill="none" stroke="#1cb4b4" stroke-width="1"/>
<path d="M433.1 120.7 L435.9 120.9 L438.8 121.1 L441.6 121.3 L444.4 121.6" fill="none" stroke="#1cb4b4" stroke-width="1"/>
<path d="M433.1 111.3 L435.9 111.5 L438.8 111.8 L441.6 112.0 L444.4 112.2" fill="none" stroke="#1cb4b4" stroke-width="1"/>
<path d="M450.7 172.9 L453.5 173.1 L456.4 173.3 L459.2 173.5 L462.0 173.7" fill="none" stroke="#1cb4b4" stroke-width="1"/>
<path d="M450.7 151.3 L453.5 151.5 L456.4 151.7 L459.2 151.9 L462.0 152.1" fill="none" stroke="#1cb4b4" stroke-width="1"/>
<path d="M450.7 131.6 L453.5 131.8 L456.4 132.0 L459.2 132.1 L462.0 132.3" fill="none" stroke="#1cb4b4" stroke-width="1"/>
<path d="M450.7 112.7 L453.5 112.9 L456.4 113.1 L459.2 113.3 L462.0 113.5" fill="none" stroke="#1cb4b4" stroke-width="1"/>
<line x1="341.60" y1="92.50" x2="341.60" y2="197.50" stroke="#a8a8a8" stroke-width="0.7" />
<line x1="359.20" y1="92.50" x2="359.20" y2="197.50" stroke="#a8a8a8" stroke-width="0.7" />
<line x1="376.80" y1="92.50" x2="376.80" y2="197.50" stroke="#a8a8a8" stroke-width="0.7" />
<line x1="394.40" y1="92.50" x2="394.40" y2="197.50" stroke="#a8a8a8" stroke-width="0.7" />
<line x1="412.00" y1="92.50" x2="412.00" y2="197.50" stroke="#a8a8a8" stroke-width="0.7" />
<line x1="429.60" y1="92.50" x2="429.60" y2="197.50" stroke="#a8a8a8" stroke-width="0.7" />
<line x1="447.20" y1="92.50" x2="447.20" y2="197.50" stroke="#a8a8a8" stroke-width="0.7" />
<line x1="464.80" y1="92.50" x2="464.80" y2="197.50" stroke="#a8a8a8" stroke-width="0.7" />
<line x1="324.00" y1="110.00" x2="482.40" y2="110.00" stroke="#a8a8a8" stroke-width="0.7" />
<line x1="324.00" y1="127.50" x2="482.40" y2="127.50" stroke="#a8a8a8" stroke-width="0.7" />
<line x1="324.00" y1="145.00" x2="482.40" y2="145.00" stroke="#a8a8a8" stroke-width="0.7" />
<line x1="324.00" y1="162.50" x2="482.40" y2="162.50" stroke="#a8a8a8" stroke-width="0.7" />
<line x1="324.00" y1="180.00" x2="482.40" y2="180.00" stroke="#a8a8a8" stroke-width="0.7" />
<line x1="324.00" y1="158.80" x2="385.43" y2="89.19" stroke="#e4e4e4" stroke-width="0.85" />
<line x1="324.00" y1="165.90" x2="406.43" y2="88.83" stroke="#e4e4e4" stroke-width="0.85" />
<line x1="324.00" y1="170.80" x2="437.93" y2="88.58" stroke="#e4e4e4" stroke-width="0.85" />
<line x1="324.00" y1="175.50" x2="476.25" y2="88.35" stroke="#e4e4e4" stroke-width="0.85" />
<line x1="324.00" y1="180.00" x2="490.32" y2="107.55" stroke="#e4e4e4" stroke-width="0.85" />
<line x1="324.00" y1="183.80" x2="490.32" y2="126.05" stroke="#e4e4e4" stroke-width="0.85" />
<line x1="324.00" y1="187.50" x2="490.32" y2="142.03" stroke="#e4e4e4" stroke-width="0.85" />
<line x1="324.00" y1="191.30" x2="490.32" y2="154.03" stroke="#e4e4e4" stroke-width="0.85" />
</g>
<text x="386.50" y="101.60" font-size="6.6" fill="#fff" font-weight="normal" font-family='"Liberation Sans","Noto Sans CJK SC",sans-serif' text-anchor="middle" >7.7</text>
<text x="409.00" y="101.60" font-size="6.6" fill="#fff" font-weight="normal" font-family='"Liberation Sans","Noto Sans CJK SC",sans-serif' text-anchor="middle" >7.6</text>
<text x="437.50" y="101.60" font-size="6.6" fill="#fff" font-weight="normal" font-family='"Liberation Sans","Noto Sans CJK SC",sans-serif' text-anchor="middle" >7.5</text>
<text x="475.00" y="101.60" font-size="6.6" fill="#fff" font-weight="normal" font-family='"Liberation Sans","Noto Sans CJK SC",sans-serif' text-anchor="middle" >7.4</text>
<text x="475.00" y="122.20" font-size="6.6" fill="#fff" font-weight="normal" font-family='"Liberation Sans","Noto Sans CJK SC",sans-serif' text-anchor="middle" >7.3</text>
<text x="475.00" y="140.00" font-size="6.6" fill="#fff" font-weight="normal" font-family='"Liberation Sans","Noto Sans CJK SC",sans-serif' text-anchor="middle" >7.2</text>
<text x="475.00" y="155.00" font-size="6.6" fill="#fff" font-weight="normal" font-family='"Liberation Sans","Noto Sans CJK SC",sans-serif' text-anchor="middle" >7.1</text>
<text x="475.00" y="166.00" font-size="6.6" fill="#fff" font-weight="normal" font-family='"Liberation Sans","Noto Sans CJK SC",sans-serif' text-anchor="middle" >7.0</text>
<text x="475.00" y="177.00" font-size="5.8" fill="#fff" font-weight="normal" font-family='"Liberation Sans","Noto Sans CJK SC",sans-serif' text-anchor="middle" >pH</text>
<text x="453.00" y="126.40" font-size="6.4" fill="#28d8d8" font-weight="normal" font-family='"Liberation Sans","Noto Sans CJK SC",sans-serif' text-anchor="middle" >40</text>
<text x="453.00" y="145.20" font-size="6.4" fill="#28d8d8" font-weight="normal" font-family='"Liberation Sans","Noto Sans CJK SC",sans-serif' text-anchor="middle" >30</text>
<text x="453.00" y="165.40" font-size="6.4" fill="#28d8d8" font-weight="normal" font-family='"Liberation Sans","Noto Sans CJK SC",sans-serif' text-anchor="middle" >20</text>
<text x="453.00" y="188.60" font-size="6.4" fill="#28d8d8" font-weight="normal" font-family='"Liberation Sans","Noto Sans CJK SC",sans-serif' text-anchor="middle" >10</text>
<text x="453.00" y="197.20" font-size="5.8" fill="#28d8d8" font-weight="normal" font-family='"Liberation Sans","Noto Sans CJK SC",sans-serif' text-anchor="middle" >Bic</text>
<rect x="380.30" y="142.80" width="13.80" height="7.20" fill="none" stroke="#f01818" stroke-width="1.3"/>
<circle cx="380.32" cy="127.5" r="5.9" fill="none" stroke="#f4f4f4" stroke-width="1"/>
<line x1="372.32" y1="127.50" x2="388.32" y2="127.50" stroke="#f0f0f0" stroke-width="0.8" />
<line x1="380.32" y1="119.50" x2="380.32" y2="135.50" stroke="#f0f0f0" stroke-width="0.8" />
<circle cx="380.32" cy="127.5" r="3.9" fill="#ff1010"/>
<circle cx="380.32" cy="127.5" r="1.3" fill="none" stroke="#fff" stroke-width="0.7"/>
<text x="338.00" y="90.00" font-size="9" fill="#000" font-weight="900" font-family='"Liberation Serif","Noto Serif CJK SC",serif' text-anchor="start" textLength="67.8" lengthAdjust="spacing">间质的血气分析</text>
<text x="412.60" y="89.70" font-size="8" fill="#08082c" font-weight="bold" font-family='"Liberation Sans","Noto Sans CJK SC",sans-serif' text-anchor="start" textLength="18.7" lengthAdjust="spacingAndGlyphs">(22.4)</text>
<text x="322.20" y="95.10" font-size="6.8" fill="#0e0e46" font-weight="normal" font-family='"Liberation Sans","Noto Sans CJK SC",sans-serif' text-anchor="end" >30</text>
<text x="322.20" y="112.60" font-size="6.8" fill="#0e0e46" font-weight="normal" font-family='"Liberation Sans","Noto Sans CJK SC",sans-serif' text-anchor="end" >20</text>
<text x="322.20" y="130.10" font-size="6.8" fill="#0e0e46" font-weight="normal" font-family='"Liberation Sans","Noto Sans CJK SC",sans-serif' text-anchor="end" >10</text>
<text x="322.20" y="147.60" font-size="6.8" fill="#0e0e46" font-weight="normal" font-family='"Liberation Sans","Noto Sans CJK SC",sans-serif' text-anchor="end" >0</text>
<text x="322.20" y="165.10" font-size="6.8" fill="#0e0e46" font-weight="normal" font-family='"Liberation Sans","Noto Sans CJK SC",sans-serif' text-anchor="end" >-10</text>
<text x="322.20" y="182.60" font-size="6.8" fill="#0e0e46" font-weight="normal" font-family='"Liberation Sans","Noto Sans CJK SC",sans-serif' text-anchor="end" >-20</text>
<text x="322.20" y="200.10" font-size="6.8" fill="#0e0e46" font-weight="normal" font-family='"Liberation Sans","Noto Sans CJK SC",sans-serif' text-anchor="end" >-30</text>
<text x="300.00" y="141.00" font-size="7.4" fill="#08082c" font-weight="bold" font-family='"Liberation Sans","Noto Sans CJK SC",sans-serif' text-anchor="start" >iSBE</text>
<text x="303.00" y="153.60" font-size="7.2" fill="#08082c" font-weight="bold" font-family='"Liberation Sans","Noto Sans CJK SC",sans-serif' text-anchor="start" >mM</text>
<text x="341.60" y="205.60" font-size="6.6" fill="#0e0e46" font-weight="normal" font-family='"Liberation Sans","Noto Sans CJK SC",sans-serif' text-anchor="middle" >20</text>
<text x="341.60" y="213.60" font-size="6.2" fill="#0e0e46" font-weight="normal" font-family='"Liberation Sans","Noto Sans CJK SC",sans-serif' text-anchor="middle" >2.7</text>
<text x="359.20" y="205.60" font-size="6.6" fill="#0e0e46" font-weight="normal" font-family='"Liberation Sans","Noto Sans CJK SC",sans-serif' text-anchor="middle" >30</text>
<text x="359.20" y="213.60" font-size="6.2" fill="#0e0e46" font-weight="normal" font-family='"Liberation Sans","Noto Sans CJK SC",sans-serif' text-anchor="middle" >4.0</text>
<text x="376.80" y="205.60" font-size="6.6" fill="#0e0e46" font-weight="normal" font-family='"Liberation Sans","Noto Sans CJK SC",sans-serif' text-anchor="middle" >40</text>
<text x="376.80" y="213.60" font-size="6.2" fill="#0e0e46" font-weight="normal" font-family='"Liberation Sans","Noto Sans CJK SC",sans-serif' text-anchor="middle" >5.3</text>
<text x="394.40" y="205.60" font-size="6.6" fill="#0e0e46" font-weight="normal" font-family='"Liberation Sans","Noto Sans CJK SC",sans-serif' text-anchor="middle" >50</text>
<text x="394.40" y="213.60" font-size="6.2" fill="#0e0e46" font-weight="normal" font-family='"Liberation Sans","Noto Sans CJK SC",sans-serif' text-anchor="middle" >6.7</text>
<text x="412.00" y="205.60" font-size="6.6" fill="#0e0e46" font-weight="normal" font-family='"Liberation Sans","Noto Sans CJK SC",sans-serif' text-anchor="middle" >60</text>
<text x="412.00" y="213.60" font-size="6.2" fill="#0e0e46" font-weight="normal" font-family='"Liberation Sans","Noto Sans CJK SC",sans-serif' text-anchor="middle" >8.0</text>
<text x="429.60" y="205.60" font-size="6.6" fill="#0e0e46" font-weight="normal" font-family='"Liberation Sans","Noto Sans CJK SC",sans-serif' text-anchor="middle" >70</text>
<text x="429.60" y="213.60" font-size="6.2" fill="#0e0e46" font-weight="normal" font-family='"Liberation Sans","Noto Sans CJK SC",sans-serif' text-anchor="middle" >9.3</text>
<text x="447.20" y="205.60" font-size="6.6" fill="#0e0e46" font-weight="normal" font-family='"Liberation Sans","Noto Sans CJK SC",sans-serif' text-anchor="middle" >80</text>
<text x="447.20" y="213.60" font-size="6.2" fill="#0e0e46" font-weight="normal" font-family='"Liberation Sans","Noto Sans CJK SC",sans-serif' text-anchor="middle" >10.7</text>
<text x="462.50" y="205.60" font-size="6.6" fill="#0e0e46" font-weight="normal" font-family='"Liberation Sans","Noto Sans CJK SC",sans-serif' text-anchor="start" >mmHg</text>
<text x="461.50" y="213.60" font-size="6.2" fill="#0e0e46" font-weight="normal" font-family='"Liberation Sans","Noto Sans CJK SC",sans-serif' text-anchor="start" >kPa</text>
<text x="478.50" y="213.40" font-size="5.4" fill="#eaeaff" font-weight="normal" font-family='"Liberation Sans","Noto Sans CJK SC",sans-serif' text-anchor="start" >11.73</text>
<text x="311.50" y="210.80" font-size="7.4" fill="#08082c" font-weight="bold" font-family='"Liberation Sans","Noto Sans CJK SC",sans-serif' text-anchor="start" textLength="22.5" lengthAdjust="spacingAndGlyphs">iPCO2</text>
<text x="316.00" y="221.40" font-size="6.2" fill="#0c0c40" font-weight="normal" font-family='"Liberation Sans","Noto Sans CJK SC",sans-serif' text-anchor="start" textLength="84" lengthAdjust="spacingAndGlyphs">Modified Henderson Equation:</text>
<text x="424.00" y="221.40" font-size="6.2" fill="#0c0c40" font-weight="normal" font-family='"Liberation Sans","Noto Sans CJK SC",sans-serif' text-anchor="start" textLength="20.5" lengthAdjust="spacingAndGlyphs">Overall</text>
<text x="455.50" y="221.40" font-size="6.2" fill="#0c0c40" font-weight="normal" font-family='"Liberation Sans","Noto Sans CJK SC",sans-serif' text-anchor="start" textLength="27.5" lengthAdjust="spacingAndGlyphs">Metabolic</text>
<text x="309.00" y="229.00" font-size="7.2" fill="#08082c" font-weight="bold" font-family='"Liberation Sans","Noto Sans CJK SC",sans-serif' text-anchor="start" textLength="98" lengthAdjust="spacingAndGlyphs" xml:space="preserve">[H+] x [HCO3-]  =  k  x  iPCO2</text>
<text x="431.00" y="229.00" font-size="7.4" fill="#08082c" font-weight="bold" font-family='"Liberation Sans","Noto Sans CJK SC",sans-serif' text-anchor="start" >pHi</text>
<text x="447.50" y="229.00" font-size="7.2" fill="#08082c" font-weight="bold" font-family='"Liberation Sans","Noto Sans CJK SC",sans-serif' text-anchor="start" textLength="15.5" lengthAdjust="spacingAndGlyphs">iSBE</text>
<text x="471.00" y="229.00" font-size="7.2" fill="#08082c" font-weight="bold" font-family='"Liberation Sans","Noto Sans CJK SC",sans-serif' text-anchor="start" textLength="16" lengthAdjust="spacingAndGlyphs">iPO2</text>
<text x="499.00" y="229.00" font-size="7.2" fill="#08082c" font-weight="bold" font-family='"Liberation Sans","Noto Sans CJK SC",sans-serif' text-anchor="start" textLength="16" lengthAdjust="spacingAndGlyphs">iSO2</text>
<text x="309.00" y="240.50" font-size="8.7" fill="#f8f8ff" font-weight="bold" font-family='"Liberation Sans","Noto Sans CJK SC",sans-serif' text-anchor="start" textLength="13.5" lengthAdjust="spacingAndGlyphs">33.4</text>
<text x="328.50" y="240.50" font-size="6" fill="#d8d8fc" font-weight="normal" font-family='"Liberation Sans","Noto Sans CJK SC",sans-serif' text-anchor="start" textLength="3.2" lengthAdjust="spacingAndGlyphs">x</text>
<text x="335.00" y="240.50" font-size="8.7" fill="#f8f8ff" font-weight="bold" font-family='"Liberation Sans","Noto Sans CJK SC",sans-serif' text-anchor="start" textLength="19" lengthAdjust="spacingAndGlyphs">30.20</text>
<text x="362.50" y="240.50" font-size="6" fill="#d8d8fc" font-weight="normal" font-family='"Liberation Sans","Noto Sans CJK SC",sans-serif' text-anchor="start" textLength="19.5" lengthAdjust="spacingAndGlyphs">= 24  x</text>
<text x="387.50" y="240.50" font-size="8.7" fill="#f8f8ff" font-weight="bold" font-family='"Liberation Sans","Noto Sans CJK SC",sans-serif' text-anchor="start" textLength="18" lengthAdjust="spacingAndGlyphs">42.00</text>
<text x="406.00" y="240.50" font-size="5.6" fill="#f8f8ff" font-weight="normal" font-family='"Liberation Sans","Noto Sans CJK SC",sans-serif' text-anchor="start" textLength="17.5" lengthAdjust="spacingAndGlyphs">mmHg</text>
<text x="428.00" y="240.50" font-size="8.7" fill="#f8f8ff" font-weight="bold" font-family='"Liberation Sans","Noto Sans CJK SC",sans-serif' text-anchor="start" textLength="12.5" lengthAdjust="spacingAndGlyphs">7.48</text>
<text x="447.50" y="240.50" font-size="8.7" fill="#f8f8ff" font-weight="bold" font-family='"Liberation Sans","Noto Sans CJK SC",sans-serif' text-anchor="start" textLength="18" lengthAdjust="spacingAndGlyphs">10.00</text>
<text x="471.00" y="240.50" font-size="8.7" fill="#f8f8ff" font-weight="bold" font-family='"Liberation Sans","Noto Sans CJK SC",sans-serif' text-anchor="start" textLength="18" lengthAdjust="spacingAndGlyphs">87.90</text>
<text x="502.00" y="240.50" font-size="8.7" fill="#f8f8ff" font-weight="bold" font-family='"Liberation Sans","Noto Sans CJK SC",sans-serif' text-anchor="start" textLength="18" lengthAdjust="spacingAndGlyphs">98.00</text>
</svg>
</body></html>
